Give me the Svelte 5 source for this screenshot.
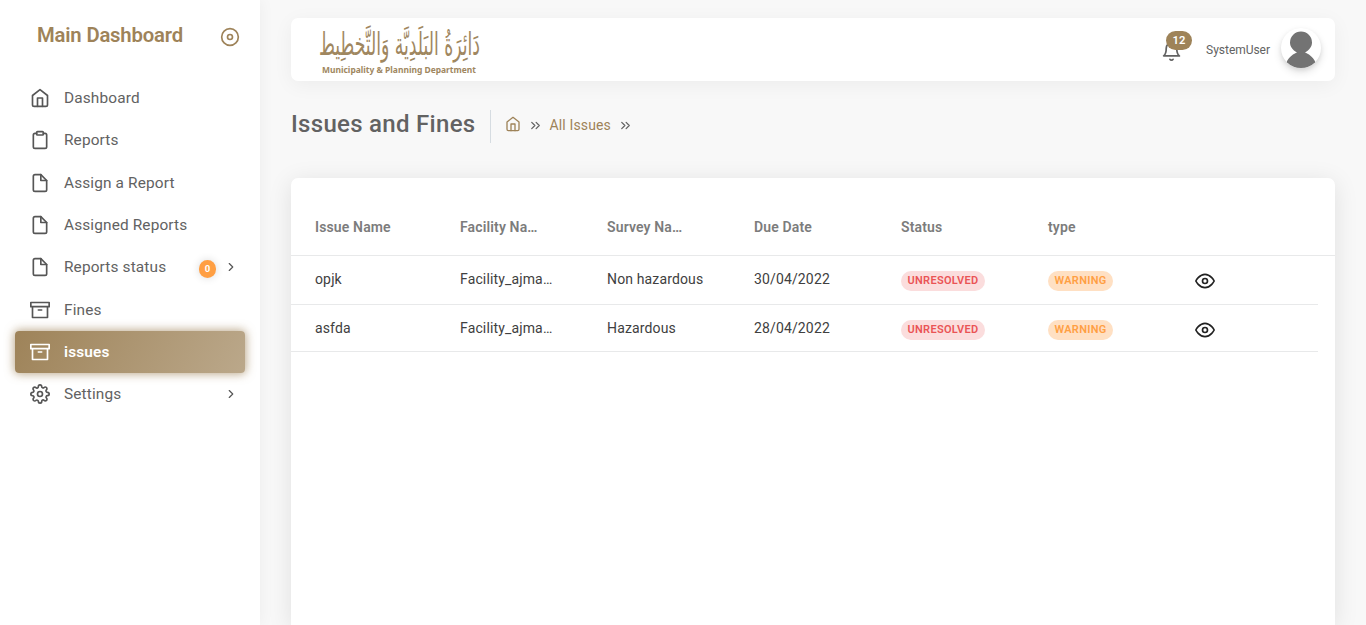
<script>
  const menu = [
    { label: 'Dashboard', icon: 'home' },
    { label: 'Reports', icon: 'clipboard' },
    { label: 'Assign a Report', icon: 'file' },
    { label: 'Assigned Reports', icon: 'file' },
    { label: 'Reports status', icon: 'file', badge: 0, arrow: true },
    { label: 'Fines', icon: 'archive' },
    { label: 'issues', icon: 'archive', active: true },
    { label: 'Settings', icon: 'settings', arrow: true }
  ];
  const columns = ['Issue Name', 'Facility Name', 'Survey Name', 'Due Date', 'Status', 'type', ''];
  const rows = [
    { name: 'opjk', facility: 'Facility_ajman_1', survey: 'Non hazardous', due: '30/04/2022' },
    { name: 'asfda', facility: 'Facility_ajman_1', survey: 'Hazardous', due: '28/04/2022' }
  ];
</script>

{#snippet icon(name, size = 20)}
  <svg class="icon" width={size} height={size} viewBox="0 0 24 24">
    {#if name === 'home'}
      <path d="M3 9l9-7 9 7v11a2 2 0 0 1-2 2H5a2 2 0 0 1-2-2z" />
      <path d="M9 22V12h6v10" />
    {:else if name === 'clipboard'}
      <path d="M16 4h2a2 2 0 0 1 2 2v14a2 2 0 0 1-2 2H6a2 2 0 0 1-2-2V6a2 2 0 0 1 2-2h2" />
      <rect x="8" y="2" width="8" height="4" rx="1" />
    {:else if name === 'file'}
      <path d="M13 2H6a2 2 0 0 0-2 2v16a2 2 0 0 0 2 2h12a2 2 0 0 0 2-2V9z" />
      <path d="M13 2v7h7" />
    {:else if name === 'archive'}
      <path d="M21 8v13H3V8M1 3h22v5H1zM10 12h4" />
    {:else if name === 'settings'}
      <circle cx="12" cy="12" r="3" />
      <path d="M19.4 15a1.65 1.65 0 0 0 .33 1.82l.06.06a2 2 0 0 1 0 2.83 2 2 0 0 1-2.83 0l-.06-.06a1.65 1.65 0 0 0-1.82-.33 1.65 1.65 0 0 0-1 1.51V21a2 2 0 0 1-2 2 2 2 0 0 1-2-2v-.09A1.65 1.65 0 0 0 9 19.4a1.65 1.65 0 0 0-1.82.33l-.06.06a2 2 0 0 1-2.83 0 2 2 0 0 1 0-2.83l.06-.06a1.65 1.65 0 0 0 .33-1.82 1.65 1.65 0 0 0-1.51-1H3a2 2 0 0 1-2-2 2 2 0 0 1 2-2h.09A1.65 1.65 0 0 0 4.6 9a1.65 1.65 0 0 0-.33-1.82l-.06-.06a2 2 0 0 1 0-2.83 2 2 0 0 1 2.83 0l.06.06a1.65 1.65 0 0 0 1.82.33H9a1.65 1.65 0 0 0 1-1.51V3a2 2 0 0 1 2-2 2 2 0 0 1 2 2v.09a1.65 1.65 0 0 0 1 1.51 1.65 1.65 0 0 0 1.82-.33l.06-.06a2 2 0 0 1 2.83 0 2 2 0 0 1 0 2.83l-.06.06a1.65 1.65 0 0 0-.33 1.82V9a1.65 1.65 0 0 0 1.51 1H21a2 2 0 0 1 2 2 2 2 0 0 1-2 2h-.09a1.65 1.65 0 0 0-1.51 1z" />
    {:else if name === 'disc'}
      <circle cx="12" cy="12" r="10" />
      <circle cx="12" cy="12" r="3" />
    {:else if name === 'chevron'}
      <path d="M9 18l6-6-6-6" />
    {:else if name === 'chevrons'}
      <path d="M13 17l5-5-5-5M6 17l5-5-5-5" />
    {:else if name === 'bell'}
      <path d="M18 8A6 6 0 0 0 6 8c0 7-3 9-3 9h18s-3-2-3-9M13.73 21a2 2 0 0 1-3.46 0" />
    {:else if name === 'eye'}
      <path d="M1 12s4-8 11-8 11 8 11 8-4 8-11 8-11-8-11-8z" />
      <circle cx="12" cy="12" r="3" />
    {/if}
  </svg>
{/snippet}

<div class="page">
  <aside>
    <div class="brand">
      <h2>Main Dashboard</h2>
      {@render icon('disc', 20)}
    </div>
    <nav>
      {#each menu as item}
        <div class="item" class:active={item.active}>
          {@render icon(item.icon)}
          <span class="label">{item.label}</span>
          {#if item.badge !== undefined}<span class="count">{item.badge}</span>{/if}
          {#if item.arrow}<span class="arrow">{@render icon('chevron', 14)}</span>{/if}
        </div>
      {/each}
    </nav>
  </aside>

  <main>
    <header>
      <svg class="logo" width="164" height="52" viewBox="0 0 164 52">
        <text class="arabic" transform="translate(2 31) scale(1 1.5)" x="161" y="0" textLength="161" lengthAdjust="spacingAndGlyphs" direction="rtl">دَائِرَةُ البَلَدِيَّة وَالتَّخطِيط</text>
        <text class="english" x="5" y="49" textLength="154" lengthAdjust="spacingAndGlyphs">Municipality &amp; Planning Department</text>
      </svg>
      <div class="user">
        <div class="bell">{@render icon('bell', 21)}<span>12</span></div>
        <span class="username">SystemUser</span>
        <svg class="avatar" width="40" height="40" viewBox="0 0 40 40">
          <path d="M5.5 34.5C8 28 13 26 16 24.500C11.500 22 9 18.500 9 14.500a11 11 0 0 1 22 0C31 18.500 28.500 22 24 24.500C27 26 32 28 34.500 34.500A20 20 0 0 1 5.500 34.500z" />
        </svg>
      </div>
    </header>

    <div class="heading">
      <h1>Issues and Fines</h1>
      <div class="crumbs">
        <span class="gold">{@render icon('home', 16)}</span>
        {@render icon('chevrons', 15)}
        <span class="gold">All Issues</span>
        {@render icon('chevrons', 15)}
      </div>
    </div>

    <section>
      <div class="row head">
        {#each columns as column}<div class="cell">{column}</div>{/each}
      </div>
      {#each rows as row}
        <div class="row">
          <div class="cell">{row.name}</div>
          <div class="cell">{row.facility}</div>
          <div class="cell">{row.survey}</div>
          <div class="cell">{row.due}</div>
          <div class="cell"><span class="chip red">UNRESOLVED</span></div>
          <div class="cell"><span class="chip orange">WARNING</span></div>
          <div class="cell view">{@render icon('eye', 20)}</div>
        </div>
      {/each}
    </section>
  </main>
</div>

<style>
  :global(body) { margin: 0; overflow: hidden; }
  * { box-sizing: border-box; }
  .page {
    display: flex;
    width: 1366px;
    height: 625px;
    overflow: hidden;
    background: #f8f8f8;
    color: #626262;
    font: 14px/1.45 Roboto, sans-serif;
    letter-spacing: 0.14px;
  }
  .icon {
    display: block;
    flex: none;
    fill: none;
    stroke: currentColor;
    stroke-width: 2;
    stroke-linecap: round;
    stroke-linejoin: round;
  }
  aside {
    width: 260px;
    flex: none;
    background: #fff;
    box-shadow: 0 0 15px rgba(0, 0, 0, 0.05);
  }
  .brand {
    display: flex;
    align-items: center;
    justify-content: space-between;
    height: 77px;
    padding: 0 20px 3px 37px;
    color: #9e8359;
  }
  h2 {
    margin: 0 0 4px;
    font-size: 20.3px;
    font-weight: 600;
    line-height: 24px;
    letter-spacing: -0.18px;
  }
  .item {
    display: flex;
    align-items: center;
    height: 42.33px;
    margin: 0 15px;
    padding: 0 7px 0 15px;
    border-radius: 4px;
    color: #565656;
    font-size: 15.4px;
    letter-spacing: 0.14px;
  }
  .label { margin-left: 14px; flex: 1; color: #626262; }
  .active {
    font-weight: 600;
    color: #fff;
    background: linear-gradient(118deg, #9e8359, rgba(158, 131, 89, 0.7));
    box-shadow: 0 0 10px 1px rgba(158, 131, 89, 0.7);
  }
  .active .label { color: #fff; }
  .count {
    width: 17px;
    height: 18px;
    margin: 3px 8px 0 0;
    border-radius: 9px;
    background: #ff9f43;
    color: #fff;
    box-shadow: 0 0 8px rgba(0, 0, 0, 0.15);
    font-size: 9.5px;
    font-weight: 700;
    line-height: 18px;
    letter-spacing: 0;
    text-align: center;
  }
  main {
    flex: 1;
    min-width: 0;
    padding: 18px 31px 0;
    display: flex;
    flex-direction: column;
  }
  header {
    display: flex;
    justify-content: space-between;
    align-items: center;
    flex: none;
    height: 63px;
    padding: 0 14px 0 26px;
    border-radius: 7px;
    background: #fff;
    box-shadow: 0 4px 20px rgba(0, 0, 0, 0.05);
  }
  .logo { overflow: visible; fill: #a0875f; }
  .arabic { font: 21px "DejaVu Sans", sans-serif; letter-spacing: 0; }
  .english { font: 700 9px "Noto Sans", sans-serif; letter-spacing: 0; }
  .user { display: flex; align-items: center; padding-bottom: 3px; }
  .bell { position: relative; margin: 6px 24px 0 0; }
  .bell span {
    position: absolute;
    left: 5px;
    top: -10px;
    width: 26px;
    height: 19px;
    border-radius: 10px;
    background: #9e8359;
    color: #fff;
    font-size: 11.2px;
    font-weight: 600;
    line-height: 19px;
    text-align: center;
  }
  .username { margin: 5px 11px 0 0; font-size: 12px; letter-spacing: -0.03px; }
  .avatar {
    border-radius: 50%;
    background: #fff;
    box-shadow: 0 4px 8px rgba(0, 0, 0, 0.12), 0 2px 4px rgba(0, 0, 0, 0.08);
    fill: #737373;
  }
  .heading { display: flex; align-items: center; height: 33px; margin-top: 29px; flex: none; }
  h1 {
    margin: 0;
    padding-right: 14px;
    height: 33px;
    border-right: 1px solid #d6dce1;
    font-size: 24px;
    font-weight: 500;
    line-height: 28px;
    letter-spacing: 0.3px;
  }
  .crumbs { display: flex; align-items: center; margin: 0 0 2px 14px; gap: 7px; }
  .crumbs > .gold:first-child { margin-bottom: 2px; }
  .gold { color: #9e8359; }
  section {
    margin-top: 35px;
    flex: 1;
    padding-top: 21px;
    border-radius: 7px 7px 0 0;
    background: #fff;
    box-shadow: 0 4px 25px rgba(0, 0, 0, 0.1);
  }
  .row {
    display: grid;
    grid-template-columns: 145px repeat(5, 147px) 147px;
    width: 1027px;
    height: 49px;
    border-bottom: 1px solid #e8e9ea;
    color: #404040;
    line-height: 46px;
    letter-spacing: 0.14px;
  }
  .row:last-child { height: 47px; }
  .head {
    width: auto;
    height: 57px;
    color: #7c7c7c;
    font-weight: 600;
    line-height: 57px;
  }
  .cell {
    min-width: 0;
    padding: 0 24px;
    overflow: hidden;
    text-overflow: ellipsis;
    white-space: nowrap;
  }
  .head .cell { padding-right: 42px; }
  .view { padding-top: 15px; color: #222; }
  .chip {
    display: inline-block;
    height: 20px;
    margin-top: 15px;
    padding: 0 6.5px;
    border-radius: 10px;
    vertical-align: top;
    font-size: 11px;
    font-weight: 600;
    line-height: 19px;
    letter-spacing: 0.3px;
  }
  .red { background: #fbdddd; color: #ea5455; }
  .orange { background: #ffe0c3; color: #ff9f43; }
</style>
